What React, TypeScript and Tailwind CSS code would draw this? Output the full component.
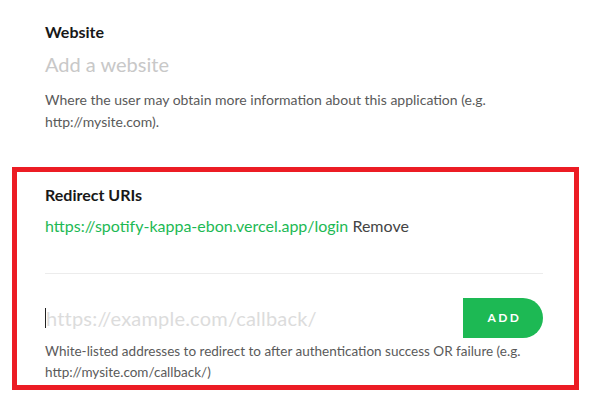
import React from 'react';

const font = { fontFamily: 'Lato, "Liberation Sans", sans-serif' };

const App: React.FC = () => {
    return (
        <div className="w-[590px] h-[411px] bg-white overflow-hidden" style={font}>
            <section className="pl-[45px] pr-[40px] pt-[22px]">
                <h3 className="text-[16px] font-bold leading-[20px] text-[#181818]">Website</h3>
                <div className="mt-[10px] text-[20px] leading-[24px] text-[#c8c8c8]">Add a website</div>
                <p className="mt-[13px] text-[14px] leading-[22px] text-[#5a5a5a]">
                    Where the user may obtain more information about this application (e.g. http://mysite.com).
                </p>
            </section>

            <section className="mt-[34px] ml-[12px] mr-[11px] h-[223px] border-[5px] border-[#ec1c24] pl-[28px] pr-[31px] pt-[13px]">
                <h3 className="text-[16px] font-bold leading-[20px] text-[#181818]">Redirect URIs</h3>
                <div className="mt-[11px] text-[16px] leading-[20px]">
                    <span className="text-[#1db954]">https://spotify-kappa-ebon.vercel.app/login</span>{' '}
                    <span className="text-[#444]">Remove</span>
                </div>
                <div className="mt-[37px] h-px bg-[#ececec]" />
                <div className="mt-[24px] flex items-center">
                    <div className="flex-1 flex items-center h-[40px]">
                        <span className="w-px h-[20px] bg-[#222]" />
                        <span className="text-[20px] tracking-[0.01em] text-[#dcdcdc]">https://example.com/callback/</span>
                    </div>
                    <button className="w-[80px] h-[40px] bg-[#1db954] rounded-r-full text-white text-[12px] font-bold tracking-[0.2em] pl-[3px]">
                        ADD
                    </button>
                </div>
                <p className="mt-[3px] text-[13.5px] leading-[21px] text-[#5a5a5a]">
                    White-listed addresses to redirect to after authentication success OR failure (e.g. http://mysite.com/callback/)
                </p>
            </section>
        </div>
    );
};

export default App;
